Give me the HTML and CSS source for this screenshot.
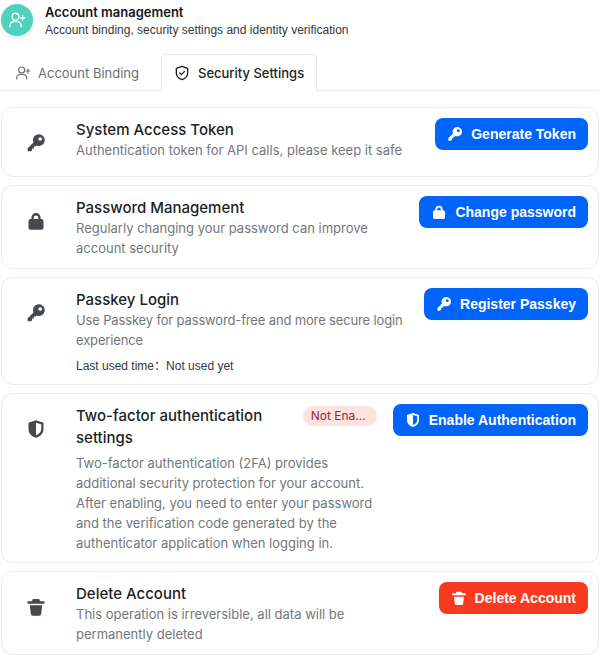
FILE: index.html
```html
<!DOCTYPE html>
<html lang="en">
<head>
<meta charset="utf-8">
<title>Account management</title>
<link rel="stylesheet" href="styles.css">
</head>
<body>
<svg class="defs" width="0" height="0" aria-hidden="true">
  <symbol id="i-key" viewBox="0 0 24 24"><path fill-rule="evenodd" d="M15.500 1.500a7 7 0 1 1-2.800 13.400L11.500 16.200H9.500V18.500H7.300V20.700L6 22H2.800A.8.8 0 0 1 2 21.200V18.300L9 11.300A7 7 0 0 1 15.500 1.500ZM17 5a2.200 2.200 0 1 0 0 4.400 2.200 2.200 0 0 0 0-4.400Z" fill="currentColor"/></symbol>
  <symbol id="i-lock" viewBox="0 0 24 24"><path fill-rule="evenodd" d="M6.500 9.500V8a5.500 5.500 0 0 1 11 0v1.500h1A2.500 2.500 0 0 1 21 12v8a2.500 2.500 0 0 1-2.500 2.500h-13A2.500 2.500 0 0 1 3 20v-8a2.500 2.500 0 0 1 2.500-2.500ZM9.300 9.500h5.400V8a2.700 2.700 0 0 0-5.400 0Z" fill="currentColor"/></symbol>
  <symbol id="i-shield" viewBox="0 0 24 24"><path fill-rule="evenodd" d="M12 1.500 21 4.500V12c0 5.500-3.800 9-9 10.500C6.800 21 3 17.500 3 12V4.500ZM12 4.500V19.500c3.700-1.300 6.300-3.900 6.300-7.500V6.400Z" fill="currentColor"/></symbol>
  <symbol id="i-trash" viewBox="0 0 24 24"><path d="M9 2.500h6a1.500 1.500 0 0 1 1.500 1.500v1H21a1.300 1.300 0 0 1 0 3H3a1.300 1.300 0 0 1 0-3h4.500V4A1.500 1.500 0 0 1 9 2.500ZM4.500 10h15l-1.300 10.500a2.300 2.300 0 0 1-2.300 2H8.100a2.300 2.300 0 0 1-2.300-2Z" fill="currentColor"/></symbol>
  <symbol id="i-user-add" viewBox="0 0 24 24"><g fill="none" stroke="currentColor" stroke-width="1.800" stroke-linecap="round"><circle cx="10" cy="7.500" r="4.500"/><path d="M2.500 21v-1.500A5.500 5.500 0 0 1 8 14h4a5.500 5.500 0 0 1 5.500 5.500V21M19.500 6v6M16.500 9h6"/></g></symbol>
  <symbol id="i-shield-check" viewBox="0 0 24 24"><g fill="none" stroke="currentColor" stroke-width="2" stroke-linecap="round" stroke-linejoin="round"><path d="M12 2 20.500 5v7c0 5-3.500 8.300-8.500 10C7 20.300 3.500 17 3.500 12V5Z"/><path d="m8.500 11.800 2.600 2.600 4.600-4.800"/></g></symbol>
</svg>

<header class="head">
  <span class="avatar"><svg class="avatar-icon"><use href="#i-user-add"/></svg></span>
  <div class="head-text">
    <div class="head-title">Account management</div>
    <div class="head-sub">Account binding, security settings and identity verification</div>
  </div>
</header>

<nav class="tabs">
  <div class="tab"><svg class="tab-icon"><use href="#i-user-add"/></svg>Account Binding</div>
  <div class="tab tab-active"><svg class="tab-icon"><use href="#i-shield-check"/></svg>Security Settings</div>
</nav>

<main class="list">
  <section class="card">
    <svg class="card-icon"><use href="#i-key"/></svg>
    <div class="body">
      <div class="title-row"><h3 class="title">System Access Token</h3></div>
      <p class="desc">Authentication token for API calls, please keep it safe</p>
    </div>
    <button class="btn"><svg class="btn-icon"><use href="#i-key"/></svg>Generate Token</button>
  </section>

  <section class="card">
    <svg class="card-icon"><use href="#i-lock"/></svg>
    <div class="body">
      <div class="title-row"><h3 class="title">Password Management</h3></div>
      <p class="desc">Regularly changing your password can improve account security</p>
    </div>
    <button class="btn"><svg class="btn-icon"><use href="#i-lock"/></svg>Change password</button>
  </section>

  <section class="card">
    <svg class="card-icon"><use href="#i-key"/></svg>
    <div class="body">
      <div class="title-row"><h3 class="title">Passkey Login</h3></div>
      <p class="desc desc-tight">Use Passkey for password-free and more secure login experience</p>
      <p class="meta">Last used time：Not used yet</p>
    </div>
    <button class="btn"><svg class="btn-icon"><use href="#i-key"/></svg>Register Passkey</button>
  </section>

  <section class="card">
    <svg class="card-icon"><use href="#i-shield"/></svg>
    <div class="body">
      <div class="title-row title-row-badge">
        <h3 class="title">Two-factor authentication settings</h3>
        <span class="badge"><span class="badge-text">Not Enabled</span></span>
      </div>
      <p class="desc">Two-factor authentication (2FA) provides additional security protection for your account. After enabling, you need to enter your password and the verification code generated by the authenticator application when logging in.</p>
    </div>
    <button class="btn"><svg class="btn-icon"><use href="#i-shield"/></svg>Enable Authentication</button>
  </section>

  <section class="card">
    <svg class="card-icon"><use href="#i-trash"/></svg>
    <div class="body">
      <div class="title-row"><h3 class="title">Delete Account</h3></div>
      <p class="desc">This operation is irreversible, all data will be permanently deleted</p>
    </div>
    <button class="btn btn-danger"><svg class="btn-icon"><use href="#i-trash"/></svg>Delete Account</button>
  </section>
</main>
</body>
</html>
```
FILE: styles.css
```css
* { box-sizing: border-box; }
html, body { margin: 0; padding: 0; background: #fff; }
body {
  width: 600px;
  padding: 0 1px 15px;
  font-family: Inter, "Liberation Sans", sans-serif;
  color: #1c1f23;
}
.defs { position: absolute; }

.head { display: flex; align-items: center; gap: 12px; height: 40px; }
.avatar {
  width: 32px; height: 32px; border-radius: 50%;
  background: #4fd2bb; color: #fff;
  display: flex; align-items: center; justify-content: center;
  box-shadow: 0 2px 6px rgba(0, 0, 0, .1);
  flex: none;
}
.avatar-icon { width: 18px; height: 18px; }
.head-title { font: 600 13px/18px Inter, "Liberation Sans", sans-serif; color: #16181b; margin-bottom: 1px; margin-top: 1px; }
.head-sub { font: 12px/17px "Liberation Sans", sans-serif; color: #33373b; }

.tabs { display: flex; margin-top: 14px; height: 37px; border-bottom: 1px solid #e9eaec; margin-left: -1px; }
.tab {
  display: flex; align-items: center; gap: 7px;
  padding: 0 22px 0 15px; height: 37px; font-size: 13px; line-height: 20px;
  color: #6b7075;
}
.tab-icon { width: 16px; height: 16px; flex: none; }
.tab-active {
  padding: 0 12px 0 12px; gap: 8px;
  border: 1px solid #e9eaec; border-bottom: 0; border-radius: 4px 4px 0 0;
  background: #fff; color: #1c1f23; font-weight: 500;
}

.list { display: flex; flex-direction: column; gap: 8px; margin-top: 16px; }
.card {
  display: flex; align-items: flex-start; gap: 14px;
  min-height: 70px;
  padding: 10px 10px 9px 15px;
  border: 1px solid #ececee; border-radius: 12px; background: #fff;
}
.card-icon { width: 20px; height: 20px; flex: none; margin: 15px 16px 0 9px; color: #46494d; }
.body { flex: 1; min-width: 0; padding-top: 1px; }
.title-row { display: flex; align-items: flex-start; gap: 12px; }
.title-row-badge { margin-bottom: 5px; padding-right: 2px; }
.title { margin: 0; flex: 1; font-size: 15px; line-height: 22px; font-weight: 500; color: #1c1f23; }
.desc { margin: -1px 0 1px; font-size: 13px; line-height: 20px; color: #73777b; }
.title-row-badge + .desc { margin-bottom: 0; }
.desc-tight { letter-spacing: -.15px; }
.meta { margin: 8px 0 1px; font: 12px/16px "Liberation Sans", "Noto Sans CJK SC", sans-serif; color: #33373b; }

.badge {
  display: block; flex: none; width: 74px; height: 20px; margin-top: 1px; padding: 0 8px;
  border-radius: 10px; background: #fde2e0; color: #8b2f33;
  font-size: 12px; line-height: 20px;
}
.badge-text { display: block; overflow: hidden; white-space: nowrap; text-overflow: ellipsis; }

.btn {
  display: flex; align-items: center; gap: 8px;
  flex: none; height: 32px; padding: 0 12px;
  border: 0; border-radius: 8px;
  background: #0064fa; color: #fff;
  font: 700 14px/20px "Liberation Sans", sans-serif;
}
.btn-danger { background: #f93920; }
.btn-icon { width: 16px; height: 16px; flex: none; }
```
